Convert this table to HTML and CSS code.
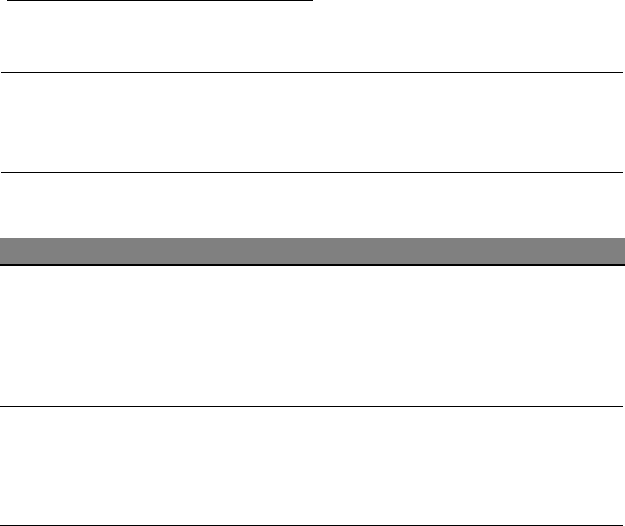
FILE: index.html
```html
<!DOCTYPE html>
<html>
<head>
<meta charset="utf-8">
<link rel="stylesheet" href="styles.css">
</head>
<body>
<div class="page">
  <div class="rule short"></div>
  <div class="block b1"></div>
  <div class="rule wide"></div>
  <div class="block b2"></div>
  <div class="rule wide"></div>
  <div class="block b3"></div>
  <div class="band"></div>
  <div class="rule full thick"></div>
  <div class="block b4"></div>
  <div class="rule edge"></div>
  <div class="block b5"></div>
  <div class="rule edge"></div>
</div>
</body>
</html>
```
FILE: styles.css
```css
html, body {
  margin: 0;
  padding: 0;
  background: #ffffff;
  font-family: "Liberation Sans", Arial, sans-serif;
}
.page {
  display: flex;
  flex-direction: column;
  width: 625px;
}
.rule {
  height: 1px;
  background: #000000;
}
.rule.short {
  margin-left: 7px;
  width: 306px;
}
.rule.wide {
  margin-left: 1px;
  width: 622px;
}
.rule.edge {
  width: 623px;
}
.rule.full {
  width: 625px;
}
.rule.thick {
  height: 2px;
}
.b1 { height: 71px; }
.b2 { height: 99px; }
.b3 { height: 65px; }
.band {
  height: 26px;
  background: #808080;
}
.b4 { height: 140px; }
.b5 { height: 118px; }
```
